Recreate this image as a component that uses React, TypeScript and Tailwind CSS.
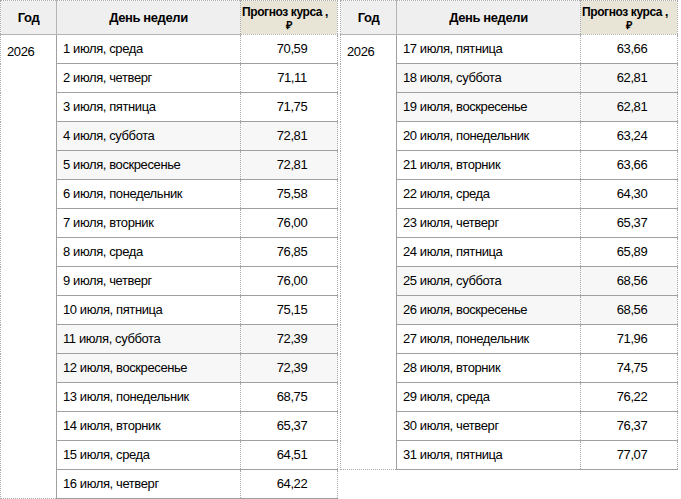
const left = [
  ["1 июля, среда", "70,59", false],
  ["2 июля, четверг", "71,11", false],
  ["3 июля, пятница", "71,75", false],
  ["4 июля, суббота", "72,81", true],
  ["5 июля, воскресенье", "72,81", true],
  ["6 июля, понедельник", "75,58", false],
  ["7 июля, вторник", "76,00", false],
  ["8 июля, среда", "76,85", false],
  ["9 июля, четверг", "76,00", false],
  ["10 июля, пятница", "75,15", false],
  ["11 июля, суббота", "72,39", true],
  ["12 июля, воскресенье", "72,39", true],
  ["13 июля, понедельник", "68,75", false],
  ["14 июля, вторник", "65,37", false],
  ["15 июля, среда", "64,51", false],
  ["16 июля, четверг", "64,22", false],
] as const;

const right = [
  ["17 июля, пятница", "63,66", false],
  ["18 июля, суббота", "62,81", true],
  ["19 июля, воскресенье", "62,81", true],
  ["20 июля, понедельник", "63,24", false],
  ["21 июля, вторник", "63,66", false],
  ["22 июля, среда", "64,30", false],
  ["23 июля, четверг", "65,37", false],
  ["24 июля, пятница", "65,89", false],
  ["25 июля, суббота", "68,56", true],
  ["26 июля, воскресенье", "68,56", true],
  ["27 июля, понедельник", "71,96", false],
  ["28 июля, вторник", "74,75", false],
  ["29 июля, среда", "76,22", false],
  ["30 июля, четверг", "76,37", false],
  ["31 июля, пятница", "77,07", false],
] as const;

type Row = readonly [string, string, boolean];

function ForecastTable({ rows }: { rows: readonly Row[] }) {
  return (
    <table className="w-[338px] table-fixed border-collapse border border-dotted border-[#a8a8a8] text-[13px] tracking-[-0.4px] text-black">
      <colgroup>
        <col className="w-[56px]" />
        <col className="w-[184px]" />
        <col />
      </colgroup>
      <thead>
        <tr className="h-[34px]">
          <th className="bg-[#efefef] border-b border-r border-solid border-[#b4b4b4] font-bold">Год</th>
          <th className="bg-[#efefef] border-b border-solid border-[#b4b4b4] font-bold">День недели</th>
          <th className="bg-[#e9e5d6] border-b border-l border-dotted border-l-[#a8a8a8] border-b-[#b4b4b4] font-bold text-[12px] leading-[14px] overflow-hidden">
            <div className="whitespace-nowrap pl-[1px] text-left">Прогноз курса ,</div>
            <div className="text-[11px] leading-[12px]">₽</div>
          </th>
        </tr>
      </thead>
      <tbody>
        {rows.map(([day, value, weekend], i) => (
          <tr key={day} className="h-[29px]">
            {i === 0 && (
              <td
                rowSpan={rows.length}
                className="align-top pt-[7px] pl-[6px] border-r border-solid border-[#a0a0a0] bg-white"
              >
                2026
              </td>
            )}
            <td className={`pl-[6px] border-b border-solid border-[#a0a0a0] ${weekend ? "bg-[#f7f7f7]" : "bg-white"}`}>
              {day}
            </td>
            <td
              className={`text-center pl-[6px] border-b border-l border-b-[#a0a0a0] border-l-[#a8a8a8] [border-left-style:dotted] [border-bottom-style:solid] ${weekend ? "bg-[#f7f7f7]" : "bg-white"}`}
            >
              {value}
            </td>
          </tr>
        ))}
      </tbody>
    </table>
  );
}

export default function App() {
  return (
    <div className="w-[681px] h-[499px] bg-white flex items-start gap-[2px] font-['Liberation_Sans',Arial,sans-serif]">
      <ForecastTable rows={left} />
      <ForecastTable rows={right} />
    </div>
  );
}
